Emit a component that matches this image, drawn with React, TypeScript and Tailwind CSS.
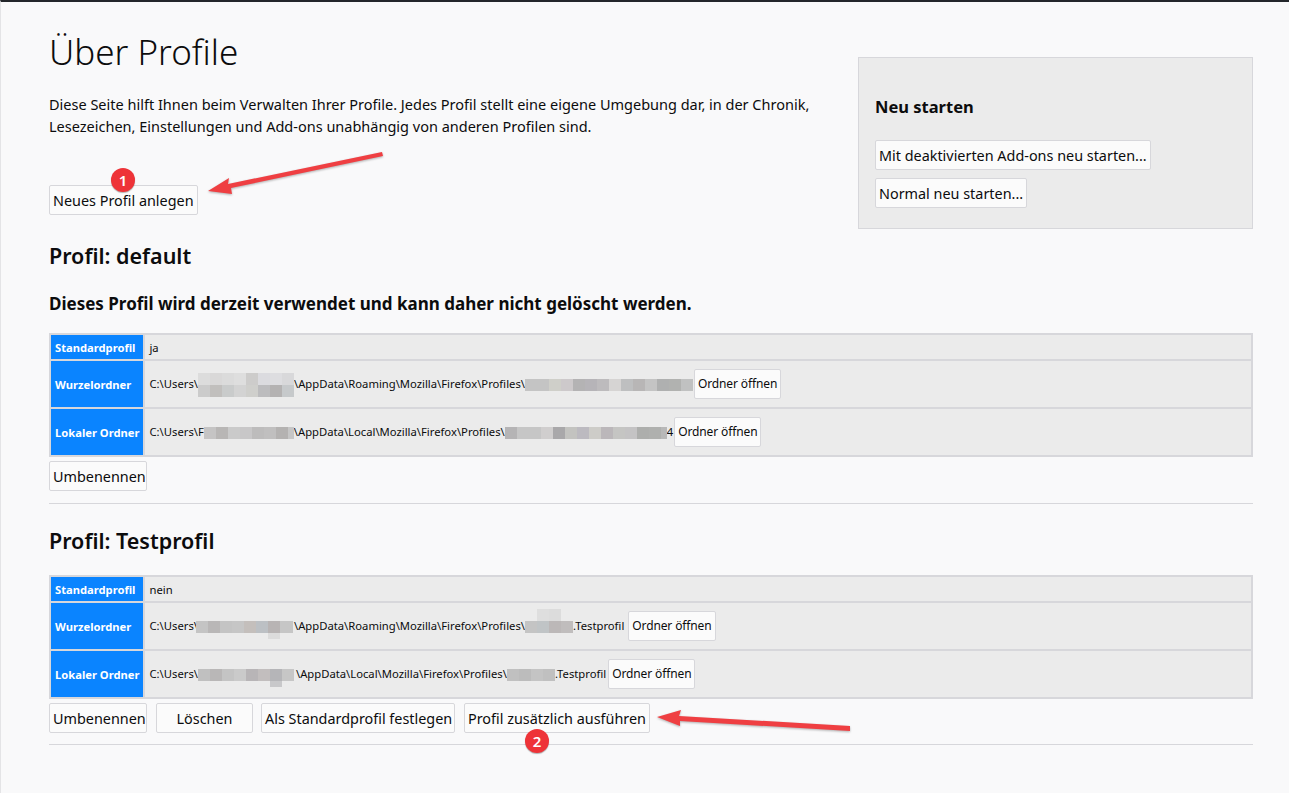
import type { ReactNode } from "react";

const FONT = "font-['Noto_Sans','Open_Sans',sans-serif]";

// pixelated parts of the paths, one class per mosaic cell
function Mosaic({ cells, top, bottom, className = "" }: { cells: string[]; top?: string[]; bottom?: string[]; className?: string }) {
  return (
    <span className={`relative inline-flex align-middle ${className}`}>
      {cells.map((c, i) => (
        <span key={i} className={`inline-block w-[12px] h-[12px] ${c}`} />
      ))}
      {top && (
        <span className="absolute left-0 bottom-full flex">
          {top.map((c, i) => (
            <span key={i} className={`inline-block w-[12px] h-[12px] ${c}`} />
          ))}
        </span>
      )}
      {bottom && (
        <span className="absolute left-0 top-full flex">
          {bottom.map((c, i) => (
            <span key={i} className={`inline-block w-[12px] h-[6px] ${c}`} />
          ))}
        </span>
      )}
    </span>
  );
}

function Btn({ children, className = "" }: { children: ReactNode; className?: string }) {
  return (
    <button className={`h-[30px] px-[3px] pt-[2px] bg-[#fbfbfb] border border-[#d7d7db] rounded-[2px] text-[14.4px] leading-none text-[#0c0c0d] whitespace-nowrap ${className}`}>
      {children}
    </button>
  );
}

function Row({ label, tall, children }: { label: string; tall?: boolean; children: ReactNode }) {
  return (
    <tr>
      <th className={`w-px bg-[#0a84ff] text-white text-[11.2px] font-bold text-left px-[4px] pt-[2px] pb-0 border-2 border-[#d7d7db] whitespace-nowrap ${tall ? "h-[48px]" : "h-[26px]"}`}>
        {label}
      </th>
      <td className="bg-[#ebebeb] text-[11.25px] text-[#0c0c0d] px-[4px] pt-[2px] pb-0 border-2 border-[#d7d7db] whitespace-nowrap">
        {children}
      </td>
    </tr>
  );
}

function OpenBtn() {
  return <Btn className="!text-[12px] !pt-0 tracking-[-0.12px] ml-[1px] align-middle -translate-y-px">Ordner öffnen</Btn>;
}

function ProfileTable({ children }: { children: ReactNode }) {
  return <table className="w-full border-collapse table-auto"><tbody>{children}</tbody></table>;
}

export default function App() {
  return (
    <div className={`relative h-[793px] overflow-hidden bg-[#f9f9fa] border-t-2 border-l border-t-[#23262b] border-l-[#e4e4e6] pl-[48px] pr-[36px] text-[#0c0c0d] ${FONT}`}>
      <aside className="float-right w-[395px] h-[172px] mt-[55px] ml-[20px] bg-[#ebebeb] border border-[#d7d7db] px-[16px] pt-[38px]">
        <h3 className="text-[16.5px] font-bold leading-[22px]">Neu starten</h3>
        <div className="mt-[22px] flex flex-col items-start gap-[8px]">
          <Btn>Mit deaktivierten Add-ons neu starten...</Btn>
          <Btn>Normal neu starten...</Btn>
        </div>
      </aside>

      <h1 className="text-[35px] font-light leading-[46px] pt-[27px] box-content">Über Profile</h1>
      <p className="mt-[18px] text-[14.5px] leading-[22px] w-[800px]">
        Diese Seite hilft Ihnen beim Verwalten Ihrer Profile. Jedes Profil stellt eine eigene Umgebung dar, in der Chronik,
        Lesezeichen, Einstellungen und Add-ons unabhängig von anderen Profilen sind.
      </p>
      <div className="mt-[48px]">
        <Btn>Neues Profil anlegen</Btn>
      </div>

      <h2 className="mt-[26px] text-[21.5px] font-semibold leading-[30px]">Profil: default</h2>
      <h3 className="mt-[21px] text-[17px] font-bold leading-[24px]">Dieses Profil wird derzeit verwendet und kann daher nicht gelöscht werden.</h3>

      <div className="mt-[17px]">
        <ProfileTable>
          <Row label="Standardprofil">ja</Row>
          <Row label="Wurzelordner" tall>
            C:\Users\
            <Mosaic
              className="translate-y-[6px]"
              top={["bg-[#dcdcdc]", "bg-[#d9d8d8]", "bg-[#dbdbdb]", "bg-[#dedede]", "bg-[#cdcccb]", "bg-[#dbdbdf]", "bg-[#dddde0]", "bg-[#d8d8da]"]}
              cells={["bg-[#cbcbcb]", "bg-[#c1bfbd]", "bg-[#c9cbcb]", "bg-[#d3d3d3]", "bg-[#cfcfcc]", "bg-[#bcbcbe]", "bg-[#b4b2b2]", "bg-[#c6c9cb]"]}
            />
            \AppData\Roaming\Mozilla\Firefox\Profiles\
            <Mosaic cells={["bg-[#c4c4c4]", "bg-[#c4c4c4]", "bg-[#cfcfc9]", "bg-[#cdc9cb]", "bg-[#b4b3b4]", "bg-[#b6b4b8]", "bg-[#bdbbbd]", "bg-[#d6d4d3]", "bg-[#bebfc0]", "bg-[#b8b6b6]", "bg-[#c4c4c4]", "bg-[#afb0b0]", "bg-[#b1b2b0]", "bg-[#c0c1c1]"]} />
            <OpenBtn />
          </Row>
          <Row label="Lokaler Ordner" tall>
            C:\Users\F
            <Mosaic cells={["bg-[#c5c4c4]", "bg-[#b8b6b5]", "bg-[#cacaca]", "bg-[#c8c7c8]", "bg-[#bdbcbc]", "bg-[#c0bfbf]", "bg-[#b4b2b1]", "!w-[6px] bg-[#c6c6c6]"]} />
            \AppData\Local\Mozilla\Firefox\Profiles\
            <Mosaic cells={["bg-[#b5b4b5]", "bg-[#c6c6c6]", "bg-[#c6c6c6]", "bg-[#d0cece]", "bg-[#a9a8aa]", "bg-[#c3c3c0]", "bg-[#bcbac0]", "bg-[#cdccc8]", "bg-[#bbb7ba]", "bg-[#c5c5c3]", "bg-[#c4c3c4]", "bg-[#adaeac]", "bg-[#afb0ae]", "!w-[6px] bg-[#b8b8b8]"]} />
            4
            <OpenBtn />
          </Row>
        </ProfileTable>
      </div>
      <div className="mt-[4px]">
        <Btn className="w-[98px]">Umbenennen</Btn>
      </div>
      <hr className="mt-[12px] border-[#d7d7db]" />

      <h2 className="mt-[22px] text-[21.5px] font-semibold leading-[30px]">Profil: Testprofil</h2>
      <div className="mt-[19px]">
        <ProfileTable>
          <Row label="Standardprofil">nein</Row>
          <Row label="Wurzelordner" tall>
            C:\Users\
            <Mosaic
              className="-ml-[2px] mr-[1px]"
              bottom={["bg-transparent", "bg-transparent", "bg-transparent", "bg-transparent", "bg-transparent", "bg-transparent", "bg-[#dcdcdc]"]}
              cells={["bg-[#c4c4c4]", "bg-[#b9b7b7]", "bg-[#c4c4c4]", "bg-[#c6c6c6]", "bg-[#c4bfbc]", "bg-[#bcc0c4]", "bg-[#b8b4b4]", "!w-[13px] bg-[#c6c6c6]"]}
            />
            \AppData\Roaming\Mozilla\Firefox\Profiles\
            <Mosaic
              top={["bg-transparent", "bg-[#dedede]", "bg-[#dcdcdc]"]}
              cells={["bg-[#c4c4c4]", "bg-[#c0c4c6]", "bg-[#bcb8b8]", "bg-[#c0bdbd]"]}
            />
            <span className="mr-[3px]">.Testprofil</span>
            <OpenBtn />
          </Row>
          <Row label="Lokaler Ordner" tall>
            C:\Users\
            <Mosaic
              className="mr-[2px]"
              bottom={["bg-transparent", "bg-transparent", "bg-transparent", "bg-transparent", "bg-transparent", "bg-transparent", "bg-[#c8c8ca]"]}
              cells={["bg-[#c0c0c0]", "bg-[#b9b7b7]", "bg-[#c4c4c4]", "bg-[#cacaca]", "bg-[#b8b5b7]", "bg-[#c2bebe]", "bg-[#b5b5b8]", "bg-[#c6c6c6]"]}
            />
            \AppData\Local\Mozilla\Firefox\Profiles\
            <Mosaic cells={["bg-[#c0c0c0]", "bg-[#bcbcbc]", "bg-[#c4c4c4]", "bg-[#c0c0c0]"]} />
            <span className="mr-[1px]">.Testprofil</span>
            <OpenBtn />
          </Row>
        </ProfileTable>
      </div>
      <div className="mt-[4px] flex gap-[9px]">
        <Btn className="w-[98px]">Umbenennen</Btn>
        <Btn className="w-[97px]">Löschen</Btn>
        <Btn className="w-[194px] -ml-px">Als Standardprofil festlegen</Btn>
        <Btn className="w-[186px]">Profil zusätzlich ausführen</Btn>
      </div>
      <hr className="mt-[11px] border-[#d7d7db]" />

      {/* annotations on top of the screenshot */}
      <svg className="absolute -left-px -top-[2px] pointer-events-none drop-shadow-[0_1px_1px_rgba(0,0,0,0.3)]" width="1289" height="793" viewBox="0 0 1289 793">
        <path d="M208 191 L229 178 L228 184 L382 152 L383 156 L231 188 L232 194 Z" fill="#ef3f42" />
        <path d="M657 717 L681 710 L679 716 L850 726 L850 731 L680 721 L680 726 Z" fill="#ef3f42" />
      </svg>
      <span className="absolute left-[110px] top-[166px] w-[24px] h-[24px] rounded-full bg-[#ee3338] text-white text-[15px] font-semibold flex items-center justify-center shadow-[0_1px_1px_rgba(0,0,0,0.3)]">1</span>
      <span className="absolute left-[524px] top-[727px] w-[24px] h-[24px] rounded-full bg-[#ee3338] text-white text-[15px] font-semibold flex items-center justify-center shadow-[0_1px_1px_rgba(0,0,0,0.3)]">2</span>
    </div>
  );
}
